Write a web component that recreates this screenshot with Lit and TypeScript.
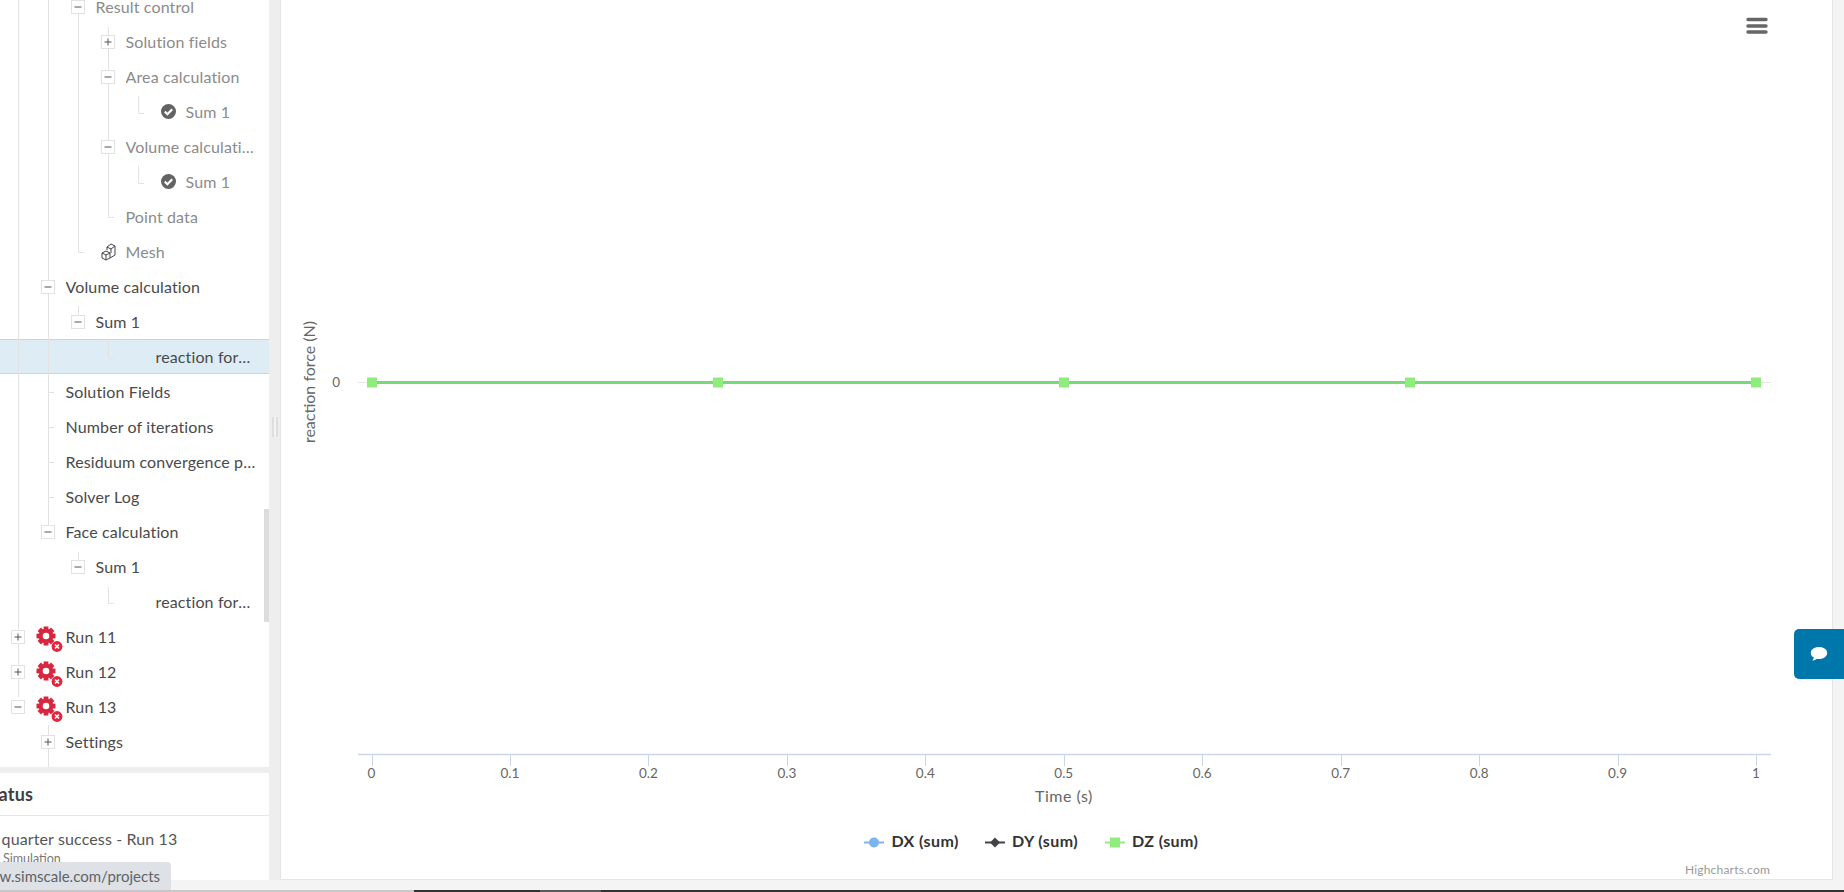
import { LitElement, html, css, svg } from "lit";
import { customElement } from "lit/decorators.js";

type Row = {
  t: string;
  x: number;
  box?: "+" | "-";
  boxX?: number;
  muted?: boolean;
  icon?: "check" | "mesh" | "gear";
  sel?: boolean;
};

const rows: Row[] = [
  { t: "Result control", x: 95.5, box: "-", boxX: 71, muted: true },
  { t: "Solution fields", x: 125.5, box: "+", boxX: 101, muted: true },
  { t: "Area calculation", x: 125.5, box: "-", boxX: 101, muted: true },
  { t: "Sum 1", x: 185.5, icon: "check", muted: true },
  { t: "Volume calculation", x: 125.5, box: "-", boxX: 101, muted: true },
  { t: "Sum 1", x: 185.5, icon: "check", muted: true },
  { t: "Point data", x: 125.5, muted: true },
  { t: "Mesh", x: 125.5, icon: "mesh", muted: true },
  { t: "Volume calculation", x: 65.5, box: "-", boxX: 41 },
  { t: "Sum 1", x: 95.5, box: "-", boxX: 71 },
  { t: "reaction force plot", x: 155.5, sel: true },
  { t: "Solution Fields", x: 65.5 },
  { t: "Number of iterations", x: 65.5 },
  { t: "Residuum convergence plot", x: 65.5 },
  { t: "Solver Log", x: 65.5 },
  { t: "Face calculation", x: 65.5, box: "-", boxX: 41 },
  { t: "Sum 1", x: 95.5, box: "-", boxX: 71 },
  { t: "reaction force plot", x: 155.5 },
  { t: "Run 11", x: 65.5, box: "+", boxX: 11, icon: "gear" },
  { t: "Run 12", x: 65.5, box: "+", boxX: 11, icon: "gear" },
  { t: "Run 13", x: 65.5, box: "-", boxX: 11, icon: "gear" },
  { t: "Settings", x: 65.5, box: "+", boxX: 41 },
];

const guides = [
  "M18.5 0V697",
  "M48.5 0V280M48.5 294V525M48.5 392.5H54M48.5 427.5H54M48.5 462.5H54M48.5 497.5H54M48.5 725V767",
  "M78.5 0V252.5H84M78.5 306V315M78.5 552V560",
  "M108.5 27V35M108.5 49V70M108.5 84V140M108.5 154V217.5H114M108.5 340V358.5H114M108.5 587V603.5H114",
  "M138.5 96V113.5H144M138.5 166V183.5H144",
];

const gearTeeth = [0, 45, 90, 135, 180, 225, 270, 315];

const xTicks = [0, 0.1, 0.2, 0.3, 0.4, 0.5, 0.6, 0.7, 0.8, 0.9, 1];
const xOf = (v: number) => 371.5 + v * 1384.5;

@customElement("app-root")
export class AppRoot extends LitElement {
  static styles = css`
    :host {
      display: block;
      width: 1844px;
      height: 892px;
      overflow: hidden;
      position: relative;
      font-family: Lato, "Noto Sans", sans-serif;
      background: #f4f4f4;
      color: #4a4a4a;
    }
    .page {
      display: flex;
      flex-direction: column;
      height: 892px;
    }
    .main {
      display: flex;
      height: 880px;
    }
    .side {
      width: 280px;
      flex: none;
      display: flex;
      flex-direction: column;
      background: #eeeeee;
      position: relative;
      border-right: 1px solid #e4e4e4;
      box-sizing: content-box;
    }
    .tree {
      width: 269px;
      height: 767px;
      background: #fff;
      position: relative;
      overflow: hidden;
      flex: none;
    }
    .guides {
      position: absolute;
      left: 0;
      top: 0;
      width: 269px;
      height: 767px;
      z-index: 2;
      pointer-events: none;
    }
    .guides path {
      fill: none;
      stroke: #e2e2e2;
      stroke-width: 1;
    }
    .rows {
      margin-top: -11px;
    }
    .row {
      height: 35px;
      display: flex;
      align-items: center;
      position: relative;
      box-sizing: border-box;
      font-size: 16px;
      letter-spacing: 0.13px;
      color: #4a4a4a;
    }
    .row.muted {
      color: #8b8b8b;
    }
    .row.sel {
      background: #deedf5;
      border-top: 1px solid #b9dcec;
      border-bottom: 1px solid #b9dcec;
    }
    .label {
      position: absolute;
      top: 0;
      bottom: 0;
      right: 13px;
      line-height: 35px;
      white-space: nowrap;
      overflow: hidden;
      text-overflow: ellipsis;
    }
    .row.sel .label {
      line-height: 33px;
    }
    .box {
      position: absolute;
      top: 11px;
      width: 14px;
      height: 14px;
      box-sizing: border-box;
      border: 1px solid #e2e2e2;
      background: #fff;
      z-index: 3;
    }
    .box svg {
      display: block;
      width: 12px;
      height: 12px;
    }
    .box path {
      stroke: #555;
      stroke-width: 1;
      fill: none;
    }
    .ic {
      position: absolute;
      z-index: 3;
      display: block;
    }
    .ic.check {
      left: 161px;
      top: 10px;
      width: 15px;
      height: 15px;
    }
    .ic.mesh {
      left: 101px;
      top: 8px;
      width: 15px;
      height: 19px;
    }
    .ic.gear {
      left: 34px;
      top: 7px;
      width: 30px;
      height: 30px;
    }
    .thumb {
      position: absolute;
      left: 264px;
      top: 509px;
      width: 5px;
      height: 113px;
      background: #dcdcdc;
      z-index: 4;
    }
    .grip {
      position: absolute;
      left: 272px;
      top: 417px;
      width: 6px;
      height: 20px;
      border-left: 2px solid #dedede;
      border-right: 2px solid #dedede;
      box-sizing: border-box;
      background: #f4f4f4;
    }
    .status {
      margin-top: 6px;
      width: 269px;
      flex: 1;
      background: #fff;
      overflow: hidden;
    }
    .status-head {
      height: 43px;
      box-sizing: border-box;
      border-bottom: 1px solid #e6e6e6;
      font-size: 18px;
      font-weight: 700;
      letter-spacing: 0.2px;
      color: #3f3f3f;
      line-height: 43px;
      white-space: nowrap;
      margin-left: -18px;
    }
    .status-title {
      margin: 13px 0 0 -33px;
      font-size: 16px;
      letter-spacing: 0.12px;
      line-height: 20px;
      color: #555;
      white-space: nowrap;
    }
    .status-sub {
      margin: 0 0 0 3px;
      font-size: 12.5px;
      line-height: 20px;
      color: #777;
    }
    .chart {
      flex: 1;
      margin-right: 11px;
      background: #fff;
      border-right: 1px solid #e6e6e6;
      border-bottom: 1px solid #e6e6e6;
      position: relative;
      min-width: 0;
    }
    .chart svg {
      position: absolute;
      left: -281px;
      top: 0;
      width: 1844px;
      height: 892px;
      font-family: Lato, "Noto Sans", sans-serif;
    }
    .strip {
      flex: 1;
    }
    .taskbar {
      height: 2px;
      display: flex;
      flex: none;
      background: #333;
    }
    .taskbar .a {
      width: 414px;
      background: #c8c8c8;
    }
    .taskbar .b {
      width: 126px;
      background: #333;
    }
    .taskbar .c {
      width: 61px;
      background: #5a5a5a;
    }
    .url {
      position: absolute;
      left: 0;
      bottom: 2px;
      width: 171px;
      height: 28px;
      background: #dee1e6;
      border-top-right-radius: 4px;
      font-size: 15px;
      line-height: 28px;
      color: #5f6368;
      overflow: hidden;
      white-space: nowrap;
      direction: rtl;
      text-align: left;
      z-index: 5;
      box-sizing: border-box;
      padding-right: 11px;
    }
    .url span {
      direction: ltr;
      unicode-bidi: bidi-override;
    }
    .chat {
      position: absolute;
      left: 1794px;
      top: 629px;
      width: 50px;
      height: 50px;
      background: #0077aa;
      border-radius: 5px 0 0 5px;
      display: flex;
      align-items: center;
      justify-content: center;
      z-index: 5;
    }
    .chat svg {
      width: 18px;
      height: 16px;
      display: block;
    }
    .t-tick {
      font-size: 13.5px;
      fill: #666;
    }
    .t-title {
      font-size: 16px;
      fill: #666;
    }
    .t-time {
      letter-spacing: 0.5px;
    }
    .t-legend {
      font-size: 16px;
      font-weight: 700;
      letter-spacing: 0.4px;
      fill: #333;
    }
    .t-credit {
      font-size: 12px;
      letter-spacing: 0.2px;
      fill: #999;
    }
  `;

  private icon(kind: Row["icon"]) {
    if (kind === "check")
      return html`<svg class="ic check" viewBox="0 0 15 15">
        <circle cx="7.5" cy="7.5" r="7.5" fill="#636363"></circle>
        <path d="M3.8 7.6 6.4 10.2 11.2 5.2" fill="none" stroke="#fff" stroke-width="2.2"></path>
      </svg>`;
    if (kind === "mesh")
      return html`<svg class="ic mesh" viewBox="0 0 15 19" fill="none" stroke="#444" stroke-width="1">
        <path d="M1 11 5 9 9 11V16L5 18 1 16ZM1 11 5 13 9 11M5 13V18"></path>
        <path d="M6 8V5L10 2 14 4V13L9 16M6 5 10 7 14 4M10 7V11"></path>
      </svg>`;
    return html`<svg class="ic gear" viewBox="0 0 30 30">
      <g fill="#d9263f">
        ${gearTeeth.map(
          (a) => svg`<rect x="9.6" y="0.5" width="4.8" height="5" transform="rotate(${a} 12 10)"></rect>`
        )}
      </g>
      <circle cx="12" cy="10" r="5.3" fill="none" stroke="#d9263f" stroke-width="4"></circle>
      <circle cx="23" cy="20.5" r="5.4" fill="#e3243b"></circle>
      <path d="M21 18.5 25 22.5M25 18.5 21 22.5" stroke="#fff" stroke-width="1.7"></path>
    </svg>`;
  }

  private renderRow(r: Row) {
    const cls = `row${r.muted ? " muted" : ""}${r.sel ? " sel" : ""}`;
    return html`<div class=${cls}>
      ${r.box
        ? html`<span class="box" style="left:${r.boxX}px"
            ><svg viewBox="0 0 12 12">
              <path d=${r.box === "+" ? "M2.5 6H9.5M6 2.5V9.5" : "M2.5 6H9.5"}></path></svg
          ></span>`
        : ""}
      ${r.icon ? this.icon(r.icon) : ""}
      <span class="label" style="left:${r.x}px">${r.t}</span>
    </div>`;
  }

  private chart() {
    return svg`
      <path d="M358 382.5H1771" stroke="#e6e6e6" stroke-width="1"></path>
      <path d="M358 754.5H1771" stroke="#ccd6eb" stroke-width="1.5"></path>
      ${xTicks.map(
        (v) => svg`
        <path d="M${Math.round(xOf(v)) + 0.5} 754V766" stroke="#ccd6eb" stroke-width="1"></path>
        <text class="t-tick" x=${xOf(v)} y="778" text-anchor="middle">${v}</text>`
      )}
      <text class="t-title t-time" x="1064" y="802" text-anchor="middle">Time (s)</text>
      <text class="t-title" transform="translate(315 382) rotate(-90)" text-anchor="middle">reaction force (N)</text>
      <text class="t-tick" x="340" y="387" text-anchor="end">0</text>
      <path d="M372 382.5H1756" stroke="#7ad87a" stroke-width="3"></path>
      ${[0, 0.25, 0.5, 0.75, 1].map(
        (v) => svg`<rect x=${Math.round(xOf(v)) - 5} y="377.5" width="10" height="10" fill="#90ed7d"></rect>`
      )}
      <path d="M1748 19.5H1766M1748 26H1766M1748 32H1766" stroke="#666" stroke-width="3.4" stroke-linecap="round"></path>
      <path d="M864 842.5H884" stroke="#7cb5ec" stroke-width="2"></path>
      <circle cx="874" cy="842.5" r="5" fill="#7cb5ec"></circle>
      <text class="t-legend" x="891.5" y="847">DX (sum)</text>
      <path d="M985 842.5H1005" stroke="#434348" stroke-width="2"></path>
      <path d="M995 837.5 1000 842.5 995 847.5 990 842.5Z" fill="#434348"></path>
      <text class="t-legend" x="1012" y="847">DY (sum)</text>
      <path d="M1105 842.5H1125" stroke="#90ed7d" stroke-width="2"></path>
      <rect x="1110" y="837.5" width="10" height="10" fill="#90ed7d"></rect>
      <text class="t-legend" x="1132" y="847">DZ (sum)</text>
      <text class="t-credit" x="1770" y="874" text-anchor="end">Highcharts.com</text>
    `;
  }

  render() {
    return html`
      <div class="page">
        <div class="main">
          <div class="side">
            <div class="tree">
              <svg class="guides" viewBox="0 0 269 767">
                ${guides.map((d) => svg`<path d=${d}></path>`)}
              </svg>
              <div class="rows">${rows.map((r) => this.renderRow(r))}</div>
              <div class="thumb"></div>
            </div>
            <div class="grip"></div>
            <div class="status">
              <div class="status-head">Status</div>
              <div class="status-title">One quarter success - Run 13</div>
              <div class="status-sub">Simulation</div>
            </div>
          </div>
          <div class="chart"><svg viewBox="0 0 1844 892">${this.chart()}</svg></div>
        </div>
        <div class="strip"></div>
        <div class="taskbar">
          <div class="a"></div>
          <div class="b"></div>
          <div class="c"></div>
        </div>
      </div>
      <div class="url"><span>https://www.simscale.com/projects</span></div>
      <div class="chat">
        <svg viewBox="0 0 18 16">
          <path fill="#fff" d="M9 1C4.3 1 .8 3.6.8 6.9c0 1.9 1.2 3.6 3.1 4.7-.2 1.1-.8 2.2-1.6 3 1.7-.1 3.3-.8 4.5-1.9.7.1 1.4.2 2.2.2 4.7 0 8.2-2.7 8.2-6S13.7 1 9 1Z"></path>
        </svg>
      </div>
    `;
  }
}
